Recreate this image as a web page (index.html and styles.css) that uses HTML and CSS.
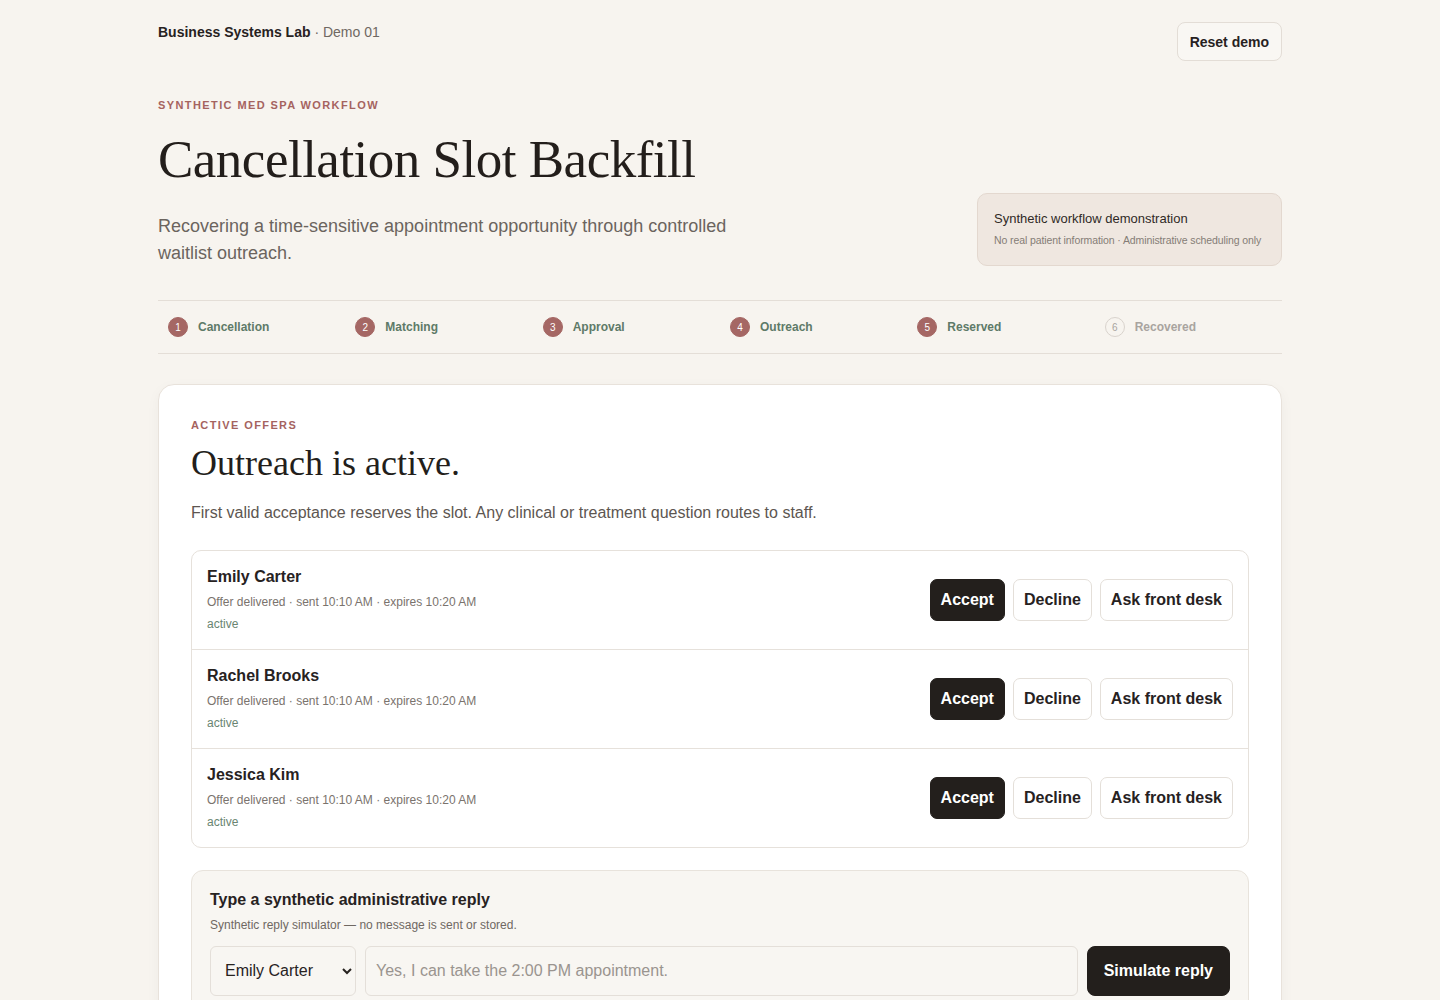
FILE: index.html
```html
<!DOCTYPE html>
<html lang="en">
<head>
    <meta charset="UTF-8">
    <meta name="viewport" content="width=device-width, initial-scale=1.0">
    <title>Cancellation Slot Backfill</title>
    <link rel="stylesheet" href="styles.css">
</head>
<body>
    <div class="page">
        <header class="topbar">
            <div class="brand"><strong>Business Systems Lab</strong> · Demo 01</div>
            <button class="btn-ghost">Reset demo</button>
        </header>

        <section class="hero">
            <div class="hero-text">
                <p class="eyebrow">Synthetic med spa workflow</p>
                <h1>Cancellation Slot Backfill</h1>
                <p class="lead">Recovering a time-sensitive appointment opportunity through controlled waitlist outreach.</p>
            </div>
            <div class="notice">
                <div class="notice-title">Synthetic workflow demonstration</div>
                <div class="notice-sub">No real patient information · Administrative scheduling only</div>
            </div>
        </section>

        <ol class="steps">
            <li class="step done"><span class="dot">1</span>Cancellation</li>
            <li class="step done"><span class="dot">2</span>Matching</li>
            <li class="step done"><span class="dot">3</span>Approval</li>
            <li class="step done"><span class="dot">4</span>Outreach</li>
            <li class="step done"><span class="dot">5</span>Reserved</li>
            <li class="step"><span class="dot">6</span>Recovered</li>
        </ol>

        <main class="card">
            <p class="eyebrow">Active offers</p>
            <h2>Outreach is active.</h2>
            <p class="card-desc">First valid acceptance reserves the slot. Any clinical or treatment question routes to staff.</p>

            <div class="offers">
                <div class="offer">
                    <div class="offer-info">
                        <div class="offer-name">Emily Carter</div>
                        <div class="offer-meta">Offer delivered · sent 10:10 AM · expires 10:20 AM</div>
                        <div class="offer-status">active</div>
                    </div>
                    <div class="offer-actions">
                        <button class="btn-dark">Accept</button>
                        <button class="btn-light">Decline</button>
                        <button class="btn-light">Ask front desk</button>
                    </div>
                </div>
                <div class="offer">
                    <div class="offer-info">
                        <div class="offer-name">Rachel Brooks</div>
                        <div class="offer-meta">Offer delivered · sent 10:10 AM · expires 10:20 AM</div>
                        <div class="offer-status">active</div>
                    </div>
                    <div class="offer-actions">
                        <button class="btn-dark">Accept</button>
                        <button class="btn-light">Decline</button>
                        <button class="btn-light">Ask front desk</button>
                    </div>
                </div>
                <div class="offer">
                    <div class="offer-info">
                        <div class="offer-name">Jessica Kim</div>
                        <div class="offer-meta">Offer delivered · sent 10:10 AM · expires 10:20 AM</div>
                        <div class="offer-status">active</div>
                    </div>
                    <div class="offer-actions">
                        <button class="btn-dark">Accept</button>
                        <button class="btn-light">Decline</button>
                        <button class="btn-light">Ask front desk</button>
                    </div>
                </div>
            </div>

            <div class="reply">
                <div class="reply-title">Type a synthetic administrative reply</div>
                <div class="reply-sub">Synthetic reply simulator — no message is sent or stored.</div>
                <form class="reply-form">
                    <select class="reply-select">
                        <option>Emily Carter</option>
                        <option>Rachel Brooks</option>
                        <option>Jessica Kim</option>
                    </select>
                    <input class="reply-input" type="text" placeholder="Yes, I can take the 2:00 PM appointment.">
                    <button type="button" class="btn-dark btn-wide">Simulate reply</button>
                </form>
            </div>
        </main>
    </div>
</body>
</html>
```

FILE: styles.css
```css
body {
    font-family: "Liberation Sans", Arial, sans-serif;
    background-color: #f7f4ef;
    color: #27221f;
    margin: 0;
}

.page {
    max-width: 1124px;
    margin: 0 auto;
    padding: 22px 0 40px;
}

button {
    font-family: inherit;
    cursor: pointer;
}

.topbar {
    display: flex;
    justify-content: space-between;
    align-items: flex-start;
}

.brand {
    font-size: 14px;
    color: #6f6862;
    padding-top: 2px;
}

.brand strong {
    color: #27221f;
}

.btn-ghost {
    background: #f9f7f3;
    border: 1px solid #e3ddd6;
    border-radius: 8px;
    padding: 0 12px;
    height: 39px;
    font-size: 14px;
    font-weight: bold;
    color: #27221f;
}

.hero {
    display: flex;
    justify-content: space-between;
    align-items: flex-end;
    margin-top: 38px;
    padding-bottom: 33px;
}

.eyebrow {
    margin: 0;
    font-size: 11px;
    font-weight: bold;
    letter-spacing: 1.4px;
    text-transform: uppercase;
    color: #a5635f;
}

.hero h1 {
    font-family: "Liberation Serif", "Times New Roman", serif;
    font-weight: normal;
    font-size: 53px;
    letter-spacing: -0.5px;
    line-height: 1.1;
    margin: 19px 0 25px;
    color: #231e1b;
}

.lead {
    margin: 0;
    max-width: 600px;
    font-size: 18px;
    line-height: 27px;
    color: #6b645e;
}

.notice {
    width: 305px;
    box-sizing: border-box;
    background: #efe7e0;
    border: 1px solid #e3d8cf;
    border-radius: 10px;
    padding: 17px 16px 19px;
    margin-bottom: 1px;
}

.notice-title {
    font-size: 13px;
    color: #2f2a26;
}

.notice-sub {
    font-size: 10.5px;
    color: #857d76;
    margin-top: 8px;
    white-space: nowrap;
    letter-spacing: -0.1px;
}

.steps {
    list-style: none;
    margin: 0;
    padding: 16px 0 16px;
    display: grid;
    grid-template-columns: repeat(6, 1fr);
    border-top: 1px solid #e4ded7;
    border-bottom: 1px solid #e4ded7;
}

.step {
    display: flex;
    align-items: center;
    gap: 10px;
    padding-left: 10px;
    font-size: 12px;
    font-weight: bold;
    color: #a9a49f;
}

.dot {
    width: 20px;
    height: 20px;
    border-radius: 50%;
    box-sizing: border-box;
    border: 1px solid #d9d3cd;
    display: flex;
    align-items: center;
    justify-content: center;
    font-size: 10px;
    font-weight: normal;
    color: #a9a49f;
}

.step.done {
    color: #5e7a68;
}

.step.done .dot {
    background: #a56764;
    border-color: #a56764;
    color: #fff;
}

.card {
    display: block;
    margin-top: 30px;
    background: #fff;
    border: 1px solid #e8e2db;
    border-radius: 16px;
    box-shadow: 0 4px 14px rgba(60, 40, 30, 0.04);
    padding: 34px 32px 32px;
}

.card h2 {
    font-family: "Liberation Serif", "Times New Roman", serif;
    font-weight: normal;
    font-size: 36px;
    line-height: 1.1;
    margin: 13px 0 20px;
    color: #231e1b;
}

.card-desc {
    margin: 0 0 28px;
    font-size: 16px;
    color: #5d5651;
}

.offers {
    border: 1px solid #e6e1db;
    border-radius: 10px;
}

.offer {
    display: flex;
    justify-content: space-between;
    align-items: center;
    padding: 0 15px;
    height: 98px;
}

.offer + .offer {
    border-top: 1px solid #e6e1db;
}

.offer-name {
    font-size: 16px;
    font-weight: bold;
    color: #27221f;
}

.offer-meta {
    font-size: 12px;
    color: #7a736d;
    margin-top: 9px;
}

.offer-status {
    font-size: 12px;
    color: #6a8572;
    margin-top: 8px;
}

.offer-actions {
    display: flex;
    gap: 8px;
}

.btn-dark {
    background: #231f1c;
    color: #fff;
    border: 1px solid #231f1c;
    border-radius: 7px;
    height: 42px;
    padding: 0 10px;
    font-size: 16px;
    font-weight: bold;
}

.btn-light {
    background: #fff;
    color: #27221f;
    border: 1px solid #e4dfd9;
    border-radius: 7px;
    height: 42px;
    padding: 0 10px;
    font-size: 16px;
    font-weight: bold;
}

.reply {
    margin-top: 22px;
    background: #f8f6f2;
    border: 1px solid #e8e3dc;
    border-radius: 12px;
    padding: 20px 18px 18px;
}

.reply-title {
    font-size: 16px;
    font-weight: bold;
    color: #27221f;
}

.reply-sub {
    font-size: 12px;
    color: #6f6862;
    margin-top: 9px;
}

.reply-form {
    display: flex;
    gap: 9px;
    margin-top: 14px;
}

.reply-select {
    width: 146px;
    height: 50px;
    padding: 0 10px;
    font-family: inherit;
    font-size: 16px;
    color: #27221f;
    background: #f8f6f2;
    border: 1px solid #e4dfd9;
    border-radius: 6px;
}

.reply-input {
    flex: 1;
    height: 50px;
    box-sizing: border-box;
    padding: 0 10px;
    font-family: inherit;
    font-size: 16px;
    background: #f8f6f2;
    border: 1px solid #e4dfd9;
    border-radius: 6px;
}

.reply-input::placeholder {
    color: #9a948f;
}

.btn-wide {
    height: 50px;
    padding: 0 16px;
    border-radius: 8px;
}
```
